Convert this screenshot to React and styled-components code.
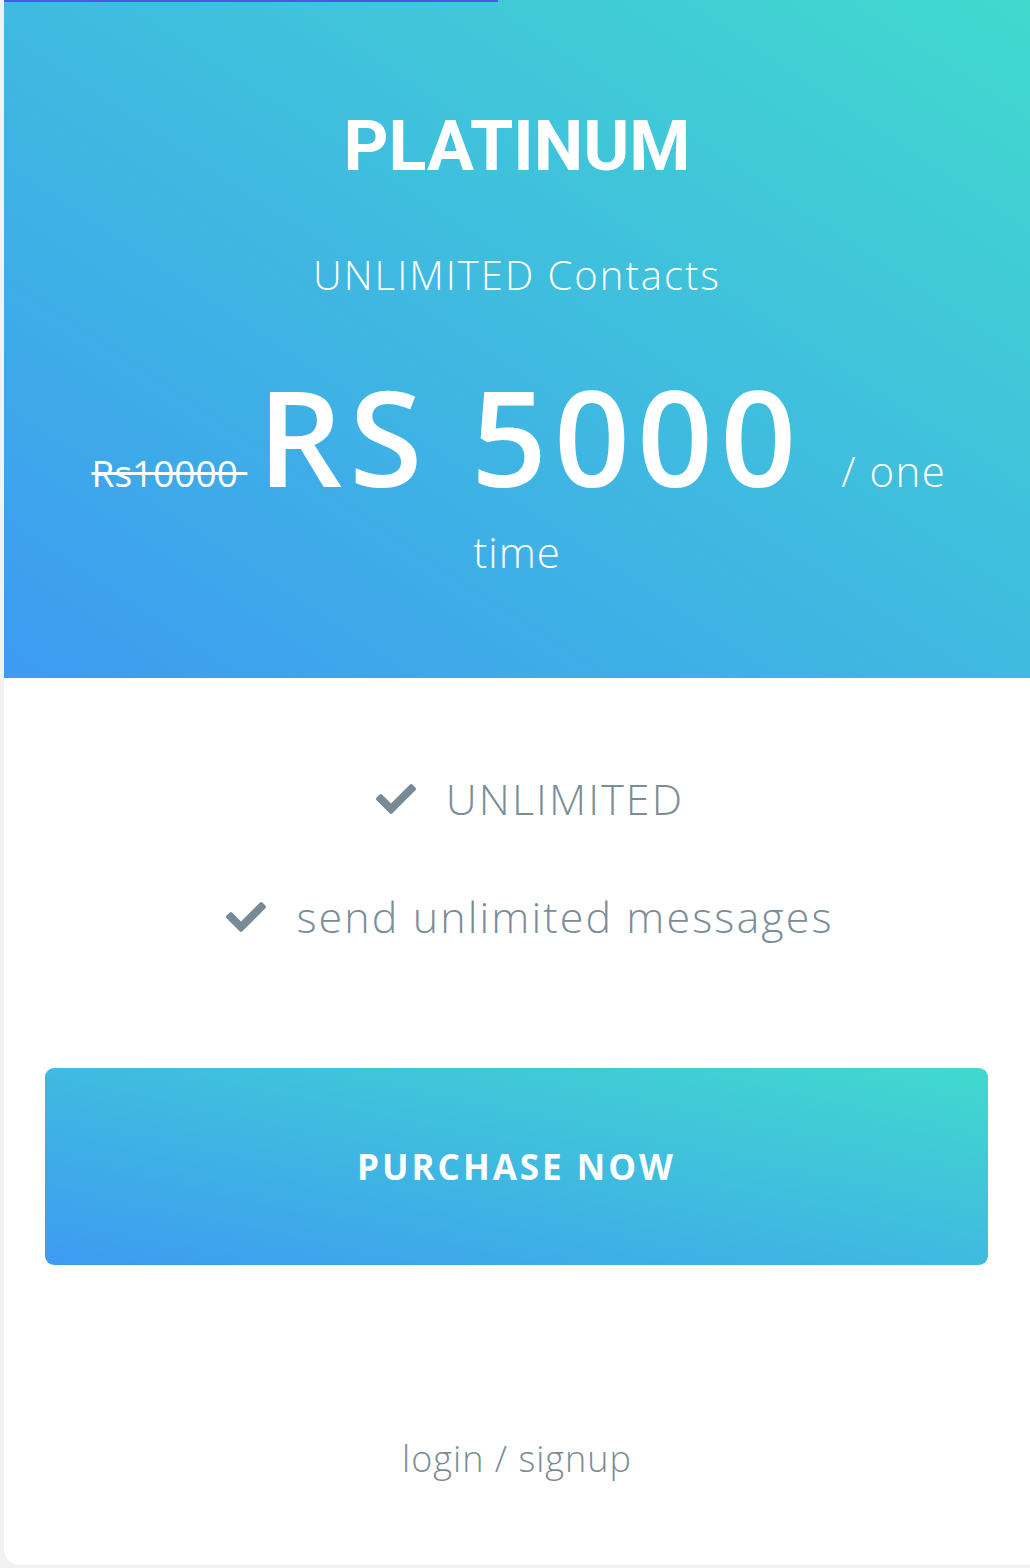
import React from "react";
import styled, { createGlobalStyle } from "styled-components";
import { FaCheck } from "react-icons/fa";

const GlobalStyle = createGlobalStyle`
  body {
    margin: 0;
    background: #f2f2f2;
    font-family: "Open Sans", "Liberation Sans", sans-serif;
  }
`;

const features = ["UNLIMITED", "send unlimited messages"];

const App = () => {
  return (
    <>
      <GlobalStyle />
      <Page>
        <Progress />
        <Card>
          <Header>
            <Title>PLATINUM</Title>
            <Subtitle>UNLIMITED Contacts</Subtitle>
            <PriceRow>
              <OldPrice>Rs10000 </OldPrice>
              <Amount>RS 5000</Amount>
              <Period>/ one</Period>
            </PriceRow>
            <PeriodWrap>time</PeriodWrap>
          </Header>

          <FeatureList>
            {features.map((f) => (
              <Feature key={f}>
                <FaCheck size={40} />
                <span>{f}</span>
              </Feature>
            ))}
          </FeatureList>

          <PurchaseButton>PURCHASE NOW</PurchaseButton>

          <LoginLink href="#">login / signup</LoginLink>
        </Card>
      </Page>
    </>
  );
};

const Page = styled.div`
  position: relative;
  padding-left: 4px;
  min-height: 1568px;
  box-sizing: border-box;
`;

const Progress = styled.div`
  position: absolute;
  top: 0;
  left: 4px;
  width: 494px;
  height: 2px;
  background: #4f57e0;
  z-index: 2;
`;

const Card = styled.div`
  background: #fff;
  height: 1565px;
  border-bottom-left-radius: 16px;
  overflow: hidden;
  display: flex;
  flex-direction: column;
`;

const Header = styled.div`
  height: 678px;
  box-sizing: border-box;
  padding-top: 111px;
  background: linear-gradient(to top right, #3d9bf2, #41d9ce);
  color: #fff;
  text-align: center;
`;

const Title = styled.h1`
  margin: 0;
  font-family: Roboto, "Liberation Sans", sans-serif;
  font-weight: 700;
  font-size: 70px;
  line-height: 70px;
`;

const Subtitle = styled.div`
  margin-top: 74px;
  font-weight: 300;
  font-size: 40px;
  line-height: 40px;
  letter-spacing: 2px;
`;

const PriceRow = styled.div`
  display: flex;
  justify-content: center;
  align-items: baseline;
  margin-top: 91px;
  padding-left: 4px;
  line-height: 1;
`;

const OldPrice = styled.span`
  font-size: 37px;
  font-weight: 400;
  text-decoration: line-through;
  white-space: pre;
  margin-right: 10px;
`;

const Amount = styled.span`
  font-size: 133px;
  line-height: 100px;
  font-weight: 600;
  letter-spacing: 7px;
`;

const Period = styled.span`
  font-size: 42px;
  font-weight: 300;
  margin-left: 38px;
  letter-spacing: 1.5px;
`;

const PeriodWrap = styled.div`
  font-size: 42px;
  font-weight: 300;
  line-height: 40px;
  margin-top: 40px;
  letter-spacing: 1px;
`;

const FeatureList = styled.ul`
  list-style: none;
  margin: 0;
  padding: 100px 0 0 26px;
  display: flex;
  flex-direction: column;
  gap: 76px;
`;

const Feature = styled.li`
  display: flex;
  align-items: center;
  justify-content: center;
  gap: 30px;
  color: #7b8d99;
  font-size: 43px;
  font-weight: 300;
  line-height: 42px;
  letter-spacing: 2.1px;

  svg {
    color: #778a96;
  }
`;

const PurchaseButton = styled.button`
  margin: 130px 42px 0 41px;
  height: 197px;
  border: none;
  border-radius: 9px;
  background: linear-gradient(to top right, #3d9bf2, #41d9ce);
  color: #fff;
  font-family: "Open Sans", "Liberation Sans", sans-serif;
  font-size: 35px;
  font-weight: 700;
  letter-spacing: 3px;
  cursor: pointer;
`;

const LoginLink = styled.a`
  align-self: center;
  margin-top: 176px;
  color: #7b8b97;
  font-size: 36px;
  font-weight: 300;
  line-height: 36px;
  letter-spacing: 1px;
  text-decoration: none;
`;

export default App;
